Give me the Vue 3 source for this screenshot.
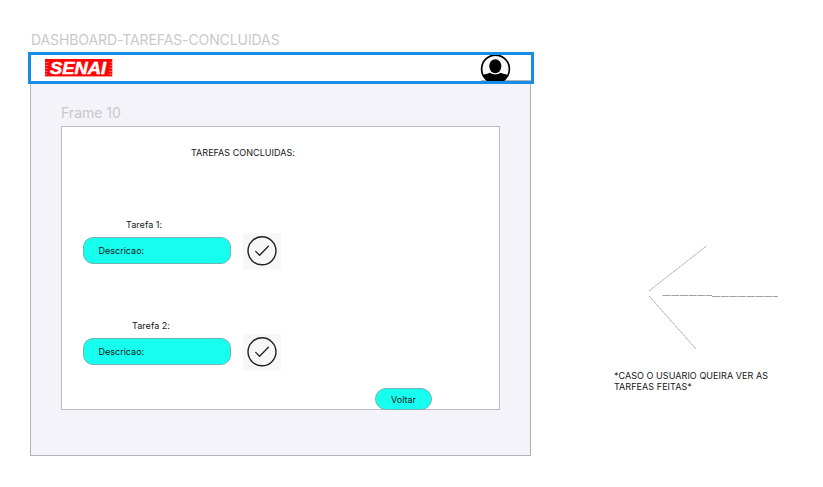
<script setup>
const tasks = [
  { id: 1, title: 'Tarefa 1:', text: 'Descricao:' },
  { id: 2, title: 'Tarefa 2:', text: 'Descricao:' },
]
</script>

<template>
  <main class="canvas">
    <section class="artboard">
      <div class="frame-name"><span>DASHBOARD-TAREFAS-CONCLUIDAS</span></div>
      <header class="topbar">
        <svg class="logo" width="68" height="18" viewBox="0 0 68 18">
          <rect x="0" y="0" width="67.300" height="17.400" fill="#fe0505" />
          <path d="M0 3.400h3.800M0 6.400h3.300M0 9.400h2.800M0 12.400h2.400M0 15.200h2M65.500 3.400h2.500M65 6.400h3M64.500 9.400h3.500M64 12.400h4M63.500 15.200h4.500" stroke="#fff" stroke-opacity="0.5" stroke-width="0.800" />
          <text x="5" y="14.900" textLength="56" lengthAdjust="spacingAndGlyphs" class="logo-text">SENAI</text>
        </svg>
        <svg class="avatar" width="31" height="26" viewBox="0 0 31 26">
          <defs>
            <clipPath id="face"><circle cx="15.500" cy="14" r="14.200" /></clipPath>
          </defs>
          <circle cx="15.500" cy="14" r="13.900" fill="#f7f7f7" stroke="#000" stroke-width="1.700" />
          <g clip-path="url(#face)">
            <ellipse cx="15.300" cy="11.200" rx="6" ry="7" />
            <path d="M1 30V23C3 18.500 6.500 19.500 10 17.800C13 20 17.500 20 20.600 17.800C24 19.500 27.800 18.500 30 23V30Z" />
          </g>
        </svg>
      </header>
      <div class="board">
        <div class="panel-name"><span>Frame 10</span></div>
        <div class="panel">
          <h1><span>TAREFAS CONCLUIDAS:</span></h1>
          <div v-for="task in tasks" :key="task.id" class="task" :class="'task-' + task.id">
            <h2>{{ task.title }}</h2>
            <div class="task-row">
              <div class="field">{{ task.text }}</div>
              <svg class="check" width="38" height="37" viewBox="0 0 38 37">
                <rect width="38" height="36.500" fill="#f7f7f7" />
                <g fill="none" stroke="#222" stroke-linecap="round" stroke-linejoin="round">
                  <circle cx="19" cy="17.800" r="14" stroke-width="1.400" />
                  <path d="M12.700 18.400L16.600 22.300L25.400 13.300" stroke-width="1.300" />
                </g>
              </svg>
            </div>
          </div>
          <button class="back">Voltar</button>
        </div>
      </div>
    </section>
    <aside class="note">
      <svg width="166" height="108" viewBox="0 0 166 108" fill="none" stroke="#777" stroke-width="0.700">
        <g stroke-dasharray="1.500 0.500">
          <path d="M35 46L92.500 1M35 51L82 104" />
        </g>
        <g stroke-dasharray="8 0.700">
          <path d="M48.500 50.500H98" />
          <path d="M98 51.500H164" />
        </g>
      </svg>
      <p>*CASO O USUARIO QUEIRA VER AS<br />TARFEAS FEITAS*</p>
    </aside>
  </main>
</template>

<style>
body {
  background: #fff;
}
</style>

<style scoped>
.canvas {
  box-sizing: border-box;
  width: 823px;
  height: 487px;
  padding: 32px 0 0 28px;
  display: flex;
  overflow: hidden;
  font-family: Inter, "Liberation Sans", sans-serif;
  color: #151515;
}
.artboard {
  width: 506px;
}
.frame-name {
  height: 20px;
  padding-left: 3px;
  font-size: 14px;
  line-height: 16px;
  letter-spacing: -0.1px;
  color: #c9c9c9;
  white-space: nowrap;
}
.topbar {
  box-sizing: border-box;
  height: 32px;
  border: 3px solid #168ee8;
  padding: 0 20px 0 14px;
  display: flex;
  justify-content: space-between;
  background: linear-gradient(#b2b2b5, #b2b2b5) right bottom / 50px 1px no-repeat #fff;
}
.logo {
  margin-top: 4px;
}
.logo-text {
  font: italic 700 17px "Liberation Sans", sans-serif;
  fill: #fff;
  stroke: #fff;
  stroke-width: 0.5px;
}
.avatar {
  height: 26px;
  width: 31px;
  overflow: hidden;
}
.board {
  box-sizing: border-box;
  width: 501px;
  height: 372px;
  margin-left: 2px;
  border: 1px solid #b2b2b5;
  border-top: 0;
  padding: 19px 30px 0;
  background: #f4f3f9;
}
.panel-name {
  height: 23px;
  font-size: 14px;
  line-height: 20px;
  color: #c8c8ca;
}
.panel {
  box-sizing: border-box;
  width: 439px;
  height: 284px;
  border: 1px solid #bebec1;
  padding: 20px 0 0 20px;
  display: flex;
  flex-direction: column;
  background: #fff;
}
h1 {
  margin: 0 0 0 109px;
  height: 51px;
  flex: none;
  font-size: 9px;
  font-weight: 400;
  line-height: 12px;
  letter-spacing: 0.03px;
}
.task {
  box-sizing: border-box;
  height: 101px;
  flex: none;
}
.task-1 {
  height: 122px;
  padding-top: 21px;
}
.task h2 {
  margin: 0 0 0 44px;
  font-size: 9px;
  font-weight: 400;
  line-height: 12px;
  letter-spacing: 0.05px;
}
.task-2 h2 {
  margin-left: 50px;
}
.task-row {
  display: flex;
  gap: 12px;
  padding-top: 2px;
}
.field {
  box-sizing: border-box;
  width: 148px;
  height: 27px;
  margin: 4px 0 0 0.5px;
  border: 1px solid #6fb5b1;
  border-radius: 10px;
  padding-left: 15px;
  background: #17ffee;
  font-size: 9px;
  line-height: 26px;
}
.check {
  margin-left: 0.5px;
}
.back {
  box-sizing: border-box;
  width: 57px;
  height: 22px;
  flex: none;
  margin: -33px 0 0 293px;
  border: 1px solid #6fb5b1;
  border-radius: 11px;
  padding: 1px 0 0;
  background: #17ffee;
  color: #151515;
  font: 9px/20px Inter, "Liberation Sans", sans-serif;
}
.note {
  margin: 213px 0 0 80px;
}
.note svg {
  display: block;
}
.note p {
  margin: 17px 0 0;
  font-size: 9px;
  line-height: 11px;
  letter-spacing: 0.06px;
  white-space: nowrap;
}
</style>
